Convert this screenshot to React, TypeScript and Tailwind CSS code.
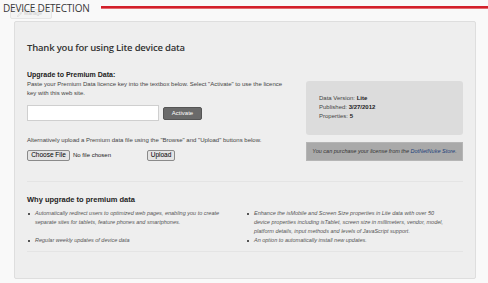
import { Pencil } from "lucide-react"

const bullets = [
  "Automatically redirect users to optimized web pages, enabling you to create separate sites for tablets, feature phones and smartphones.",
  "Enhance the isMobile and Screen Size properties in Lite data with over 50 device properties including isTablet, screen size in millimeters, vendor, model, platform details, input methods and levels of JavaScript support.",
  "Regular weekly updates of device data",
  "An option to automatically install new updates.",
]

export default function App() {
  return (
    <div className="relative w-[488px] h-[283px] overflow-hidden bg-[#f9f9f9] font-['Liberation_Sans',Arial,sans-serif] text-[#333]">
      {/* faded manage button behind the title */}
      <div className="absolute left-[10px] top-[9px] w-[42px] h-[10px] rounded-[2px] border border-[#e6e6e6] bg-[#f4f4f4] flex items-center gap-[2px] pl-[6px] text-[5px] text-[#cdcdcd]">
        <Pencil className="w-[5px] h-[5px]" />
        Manage
      </div>

      {/* module header */}
      <div className="relative z-10 flex items-center h-[16px] pl-[3px]">
        <h2 className="font-['Open_Sans',sans-serif] text-[10px] leading-[16px] tracking-[-0.2px] text-[#3a3a3a] uppercase">
          Device Detection
        </h2>
        <div className="flex-1 ml-[11px] mt-[-1px] h-[3px] bg-[#d21f2a] border-b border-[#e46a70]" />
      </div>

      {/* panel */}
      <div className="ml-[14px] mt-[5px] w-[462px] h-[258px] rounded-[2px] border border-[#dedede] bg-[#eeeeee] px-[12px] pt-[19px]">
        <h1 className="font-['Open_Sans',sans-serif] font-semibold text-[9.5px] leading-[14px] tracking-[-0.2px] text-[#333]">
          Thank you for using Lite device data
        </h1>

        <div className="flex mt-[15px]">
          <div className="w-[264px]">
            <div className="font-bold text-[7px] leading-[10px] text-[#222]">Upgrade to Premium Data:</div>
            <p className="text-[6px] leading-[9px] text-[#444] w-[262px]">
              Paste your Premium Data licence key into the textbox below. Select "Activate" to use the licence key with this web site.
            </p>
            <div className="flex items-center mt-[7px]">
              <input className="w-[132px] h-[16px] bg-white border border-[#cfcfcf]" />
              <button className="ml-[4px] w-[39px] h-[13px] rounded-[2px] bg-[#6a6a6a] border border-[#555] text-white text-[6px] leading-none">
                Activate
              </button>
            </div>
            <p className="mt-[15px] text-[6px] leading-[9px] text-[#444] whitespace-nowrap">
              Alternatively upload a Premium data file using the "Browse" and "Upload" buttons below.
            </p>
            <div className="flex items-center mt-[4px] h-[12px]">
              <button className="w-[43px] h-[11px] rounded-[2px] border border-[#8a8a8a] bg-[#e4e4e4] text-[6.5px] leading-none text-black">
                Choose File
              </button>
              <span className="ml-[3px] text-[6px] text-[#222]">No file chosen</span>
              <button className="ml-[36px] w-[28px] h-[11px] rounded-[2px] border border-[#8a8a8a] bg-[#e4e4e4] text-[6.5px] leading-none text-black">
                Upload
              </button>
            </div>
          </div>

          <div className="ml-[15px] flex-1 mt-[11px]">
            <div className="h-[54px] rounded-[3px] bg-[#dcdcdc] pl-[13px] pt-[13px] text-[6px] leading-[9px] text-[#444]">
              <div>Data Version: <b className="text-[#222]">Lite</b></div>
              <div>Published: <b className="text-[#222]">3/27/2012</b></div>
              <div>Properties: <b className="text-[#222]">5</b></div>
            </div>
            <div className="mt-[7px] h-[19px] border border-[#b5b5b5] bg-[#a9a9a9] flex items-center justify-center">
              <p className="text-[5.5px] italic text-[#333] whitespace-nowrap">
                You can purchase your license from the <span className="text-[#1d3f7a]">DotNetNuke Store</span>.
              </p>
            </div>
          </div>
        </div>

        <div className="mt-[20px] border-t border-[#e4e4e4]" />

        <div className="mt-[12px] font-bold text-[7.5px] leading-[11px] text-[#222]">Why upgrade to premium data</div>

        <ul className="mt-[4px] grid grid-cols-[219px_1fr] text-[5.5px] leading-[9px] italic text-[#555]">
          {bullets.map((b, i) => (
            <li key={i} className="flex">
              <span className="mt-[3.5px] ml-[1px] w-[2px] h-[2px] bg-[#555] shrink-0" />
              <span className="ml-[5px] w-[192px]">{b}</span>
            </li>
          ))}
        </ul>

        <div className="mt-[6px] border-t border-[#e4e4e4]" />
      </div>
    </div>
  )
}
